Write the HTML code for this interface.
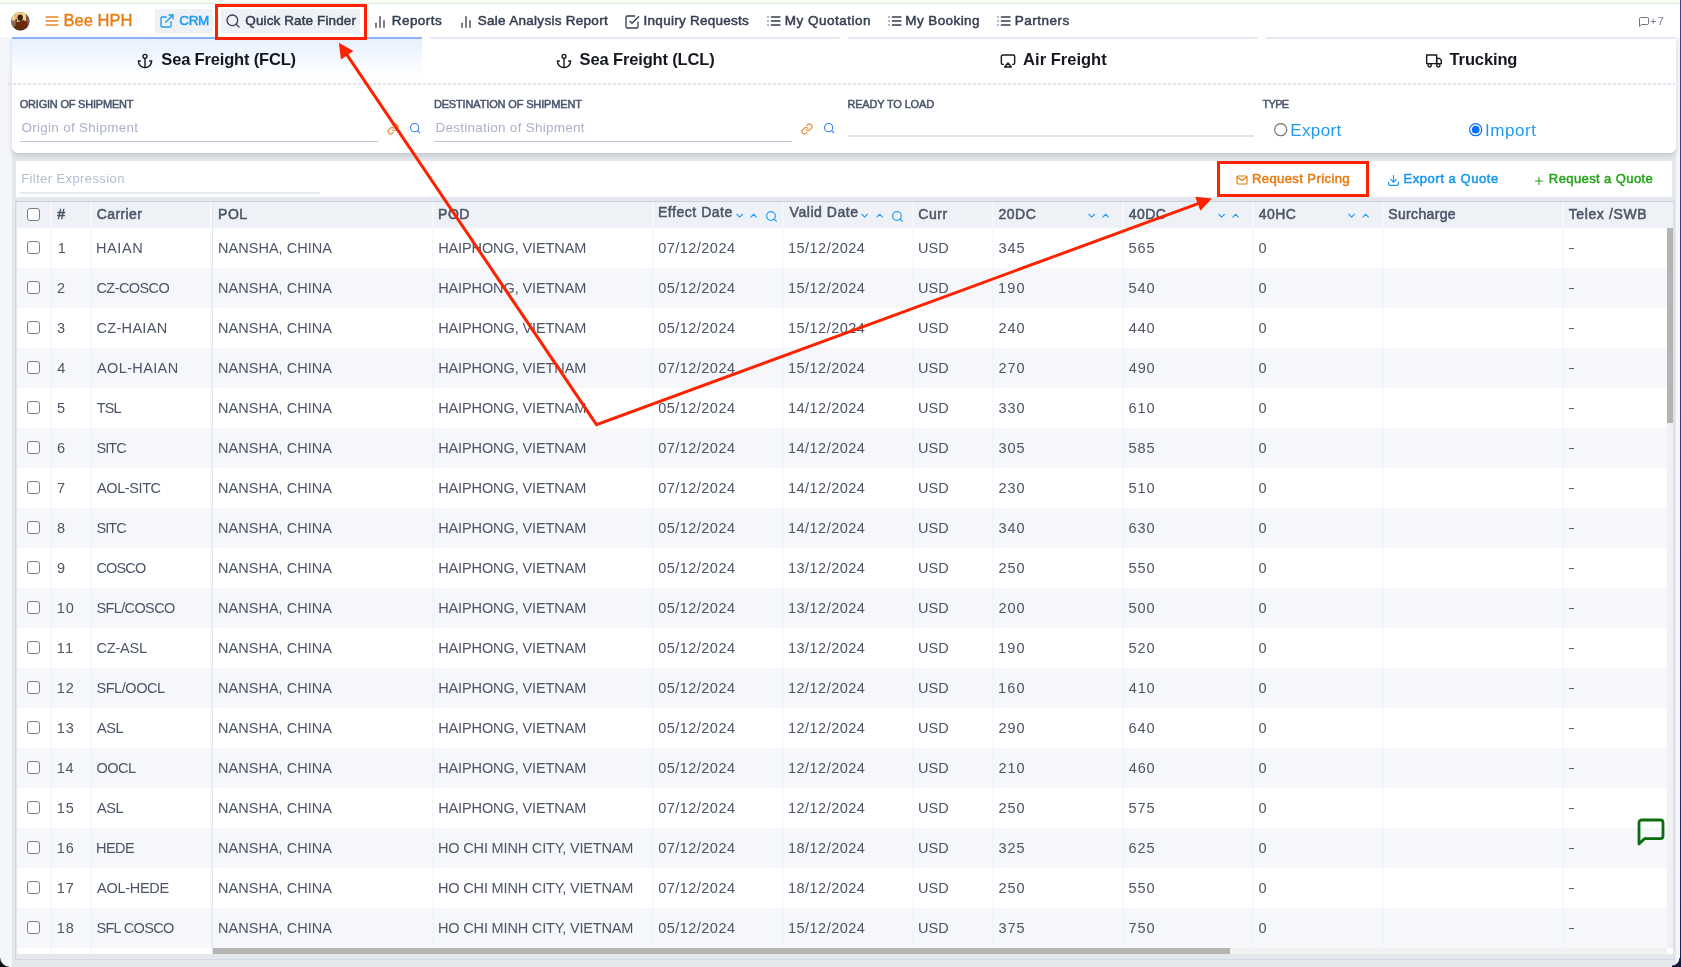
<!DOCTYPE html>
<html><head><meta charset="utf-8"><title>Bee HPH</title>
<style>
html,body{margin:0;padding:0;}
body{width:1681px;height:967px;overflow:hidden;position:relative;background:#f4f6fa;font-family:"Liberation Sans",sans-serif;}
.t{position:absolute;white-space:nowrap;line-height:20px;}
.r{position:absolute;}
svg{position:absolute;overflow:visible;}
</style></head><body><div id="w" style="position:absolute;left:0;top:0;width:1681px;height:967px;will-change:transform;">
<div class="r" style="left:0.00px;top:0.00px;width:1681.00px;height:4.00px;background:#f6fbf3;border-bottom:1px solid #dfe6dc;box-sizing:border-box;"></div>
<div class="r" style="left:0.00px;top:4.00px;width:1681.00px;height:33.00px;background:#ffffff;"></div>
<svg style="left:11.1px;top:11.7px" width="18.6" height="18.6" viewBox="0 0 18.6 18.6"><defs><clipPath id="av"><circle cx="9.3" cy="9.3" r="9.2"/></clipPath><filter id="avb" x="-10%" y="-10%" width="120%" height="120%"><feGaussianBlur stdDeviation="0.55"/></filter></defs><g clip-path="url(#av)"><rect width="18.6" height="18.6" fill="#6d4a3c"/><g filter="url(#avb)"><rect x="-1" y="-1" width="16" height="10" fill="#f3d08a"/><rect x="0" y="8.5" width="5" height="9" fill="#8a6a58"/><rect x="15" y="1" width="4" height="12" fill="#7b5648"/><rect x="4" y="1.5" width="2.2" height="6.5" fill="#f0b46a"/><ellipse cx="9.2" cy="5.6" rx="2.7" ry="3.2" fill="#38200f"/><path d="M4.6 11.5 Q5 8.4 8.5 8.4 L12.5 8.2 Q15.8 8.6 16.4 12 L16.6 19 L4.2 19 Z" fill="#692b08"/><rect x="4.6" y="7.3" width="1.6" height="2.6" fill="#3a2416"/><rect x="5.6" y="8.6" width="3" height="1.4" fill="#d9b98a"/><rect x="3.2" y="14.5" width="3.5" height="3.5" fill="#3a3a1c"/></g></g></svg>
<svg style="left:43.70px;top:12.70px" width="16.00" height="16.00" viewBox="0 0 24 24" fill="none" stroke="#e8872a" stroke-width="2.00" stroke-linecap="round" stroke-linejoin="round"><line x1="3" y1="12" x2="21" y2="12"/><line x1="3" y1="6" x2="21" y2="6"/><line x1="3" y1="18" x2="21" y2="18"/></svg>
<span class="t" style="left:63.45px;top:10px;font-size:16.50px;color:#e87a10;letter-spacing:0.042px;-webkit-text-stroke:0.35px #e87a10;">Bee HPH</span>
<div class="r" style="left:155.30px;top:8.60px;width:57.50px;height:24.50px;background:#eef1f6;"></div>
<svg style="left:158.70px;top:13.00px" width="16.00" height="16.00" viewBox="0 0 24 24" fill="none" stroke="#1e9bee" stroke-width="2.00" stroke-linecap="round" stroke-linejoin="round"><path d="M18 13v6a2 2 0 0 1-2 2H5a2 2 0 0 1-2-2V8a2 2 0 0 1 2-2h6"/><polyline points="15 3 21 3 21 9"/><line x1="10" y1="14" x2="21" y2="3"/></svg>
<span class="t" style="left:179.32px;top:11px;font-size:13.50px;color:#1e9bee;letter-spacing:-0.363px;-webkit-text-stroke:0.50px #1e9bee;">CRM</span>
<div class="r" style="left:221.10px;top:8.60px;width:139.00px;height:24.50px;background:#eef1f6;"></div>
<svg style="left:224.80px;top:13.30px" width="16.00" height="16.00" viewBox="0 0 24 24" fill="none" stroke="#353e53" stroke-width="2.00" stroke-linecap="round" stroke-linejoin="round"><circle cx="11" cy="11" r="8"/><line x1="21" y1="21" x2="16.65" y2="16.65"/></svg>
<span class="t" style="left:245.32px;top:11px;font-size:13.50px;color:#353e53;letter-spacing:0.112px;-webkit-text-stroke:0.50px #353e53;">Quick Rate Finder</span>
<svg style="left:372.00px;top:13.50px" width="16.00" height="16.00" viewBox="0 0 24 24" fill="none" stroke="#353e53" stroke-width="2.00" stroke-linecap="round" stroke-linejoin="round"><line x1="18" y1="20" x2="18" y2="10"/><line x1="12" y1="20" x2="12" y2="4"/><line x1="6" y1="20" x2="6" y2="14"/></svg>
<span class="t" style="left:391.75px;top:11px;font-size:13.50px;color:#353e53;letter-spacing:0.438px;-webkit-text-stroke:0.50px #353e53;">Reports</span>
<svg style="left:457.50px;top:13.50px" width="16.00" height="16.00" viewBox="0 0 24 24" fill="none" stroke="#353e53" stroke-width="2.00" stroke-linecap="round" stroke-linejoin="round"><line x1="18" y1="20" x2="18" y2="10"/><line x1="12" y1="20" x2="12" y2="4"/><line x1="6" y1="20" x2="6" y2="14"/></svg>
<span class="t" style="left:477.75px;top:11px;font-size:13.50px;color:#353e53;letter-spacing:0.283px;-webkit-text-stroke:0.50px #353e53;">Sale Analysis Report</span>
<svg style="left:623.90px;top:13.60px" width="16.00" height="16.00" viewBox="0 0 24 24" fill="none" stroke="#353e53" stroke-width="2.00" stroke-linecap="round" stroke-linejoin="round"><polyline points="9 11 12 14 22 4"/><path d="M21 12v7a2 2 0 0 1-2 2H5a2 2 0 0 1-2-2V5a2 2 0 0 1 2-2h11"/></svg>
<span class="t" style="left:643.62px;top:11px;font-size:13.50px;color:#353e53;letter-spacing:0.250px;-webkit-text-stroke:0.50px #353e53;">Inquiry Requests</span>
<svg style="left:765.80px;top:13.40px" width="16.00" height="16.00" viewBox="0 0 24 24" fill="none" stroke="#353e53" stroke-width="2.00" stroke-linecap="round" stroke-linejoin="round"><line x1="8" y1="6" x2="21" y2="6"/><line x1="8" y1="12" x2="21" y2="12"/><line x1="8" y1="18" x2="21" y2="18"/><line x1="3" y1="6" x2="3.01" y2="6"/><line x1="3" y1="12" x2="3.01" y2="12"/><line x1="3" y1="18" x2="3.01" y2="18"/></svg>
<span class="t" style="left:784.75px;top:11px;font-size:13.50px;color:#353e53;letter-spacing:0.500px;-webkit-text-stroke:0.50px #353e53;">My Quotation</span>
<svg style="left:886.50px;top:13.40px" width="16.00" height="16.00" viewBox="0 0 24 24" fill="none" stroke="#353e53" stroke-width="2.00" stroke-linecap="round" stroke-linejoin="round"><line x1="8" y1="6" x2="21" y2="6"/><line x1="8" y1="12" x2="21" y2="12"/><line x1="8" y1="18" x2="21" y2="18"/><line x1="3" y1="6" x2="3.01" y2="6"/><line x1="3" y1="12" x2="3.01" y2="12"/><line x1="3" y1="18" x2="3.01" y2="18"/></svg>
<span class="t" style="left:905.25px;top:11px;font-size:13.50px;color:#353e53;letter-spacing:0.417px;-webkit-text-stroke:0.50px #353e53;">My Booking</span>
<svg style="left:996.10px;top:13.40px" width="16.00" height="16.00" viewBox="0 0 24 24" fill="none" stroke="#353e53" stroke-width="2.00" stroke-linecap="round" stroke-linejoin="round"><line x1="8" y1="6" x2="21" y2="6"/><line x1="8" y1="12" x2="21" y2="12"/><line x1="8" y1="18" x2="21" y2="18"/><line x1="3" y1="6" x2="3.01" y2="6"/><line x1="3" y1="12" x2="3.01" y2="12"/><line x1="3" y1="18" x2="3.01" y2="18"/></svg>
<span class="t" style="left:1014.75px;top:11px;font-size:13.50px;color:#353e53;letter-spacing:0.482px;-webkit-text-stroke:0.50px #353e53;">Partners</span>
<svg style="left:1637.90px;top:16.40px" width="12.00" height="12.00" viewBox="0 0 24 24" fill="none" stroke="#5f6672" stroke-width="1.80" stroke-linecap="round" stroke-linejoin="round"><path d="M21 15a2 2 0 0 1-2 2H7l-4 4V5a2 2 0 0 1 2-2h14a2 2 0 0 1 2 2z"/></svg>
<span class="t" style="left:1649.90px;top:11px;font-size:11.00px;color:#7a808c;letter-spacing:1.500px;">+7</span>
<div class="r" style="left:12.00px;top:150.00px;width:1664.00px;height:817.00px;background:#e4e7ec;"></div>
<div class="r" style="left:12.00px;top:37.00px;width:1664.00px;height:116.00px;background:#ffffff;border-radius:0 4px 6px 6px;box-shadow:0 3px 5px rgba(60,70,90,.18);"></div>
<div class="r" style="left:12.00px;top:39.00px;width:410.00px;height:37.00px;background:linear-gradient(#e7f0fe,#ffffff);"></div>
<div class="r" style="left:12.00px;top:37.00px;width:410.00px;height:2.00px;background:#8bb0fb;"></div>
<div class="r" style="left:430.00px;top:37.00px;width:410.00px;height:2.00px;background:#e6e9f1;"></div>
<div class="r" style="left:848.00px;top:37.00px;width:410.00px;height:2.00px;background:#e6e9f1;"></div>
<div class="r" style="left:1266.00px;top:37.00px;width:410.00px;height:2.00px;background:#e6e9f1;"></div>
<svg style="left:137.10px;top:52.50px" width="16.00" height="16.00" viewBox="0 0 24 24" fill="none" stroke="#15181e" stroke-width="2.10" stroke-linecap="round" stroke-linejoin="round"><circle cx="12" cy="5" r="3"/><line x1="12" y1="22" x2="12" y2="8"/><path d="M5 12H2a10 10 0 0 0 20 0h-3"/></svg>
<span class="t" style="left:161.32px;top:49px;font-size:16.50px;color:#15181e;font-weight:700;letter-spacing:-0.173px;">Sea Freight (FCL)</span>
<svg style="left:555.60px;top:52.50px" width="16.00" height="16.00" viewBox="0 0 24 24" fill="none" stroke="#15181e" stroke-width="2.10" stroke-linecap="round" stroke-linejoin="round"><circle cx="12" cy="5" r="3"/><line x1="12" y1="22" x2="12" y2="8"/><path d="M5 12H2a10 10 0 0 0 20 0h-3"/></svg>
<span class="t" style="left:579.62px;top:49px;font-size:16.50px;color:#15181e;font-weight:700;letter-spacing:-0.148px;">Sea Freight (LCL)</span>
<svg style="left:999.50px;top:52.90px" width="16.00" height="16.00" viewBox="0 0 24 24" fill="none" stroke="#15181e" stroke-width="2.10" stroke-linecap="round" stroke-linejoin="round"><path d="M5 17H4a2 2 0 0 1-2-2V5a2 2 0 0 1 2-2h16a2 2 0 0 1 2 2v10a2 2 0 0 1-2 2h-1"/><polygon points="12 15 17 21 7 21 12 15"/></svg>
<span class="t" style="left:1023.12px;top:49px;font-size:16.50px;color:#15181e;font-weight:700;letter-spacing:0.013px;">Air Freight</span>
<svg style="left:1425.70px;top:53.00px" width="16.00" height="16.00" viewBox="0 0 24 24" fill="none" stroke="#15181e" stroke-width="2.10" stroke-linecap="round" stroke-linejoin="round"><rect x="1" y="3" width="15" height="13"/><polygon points="16 8 20 8 23 11 23 16 16 16 16 8"/><circle cx="5.5" cy="18.5" r="2.5"/><circle cx="18.5" cy="18.5" r="2.5"/></svg>
<span class="t" style="left:1449.58px;top:49px;font-size:16.50px;color:#15181e;font-weight:700;letter-spacing:-0.129px;">Trucking</span>
<svg style="left:0;top:0" width="1681" height="100"><line x1="8" y1="84" x2="1675" y2="84" stroke="#e0e3ee" stroke-width="2" stroke-dasharray="3 2"/></svg>
<span class="t" style="left:19.75px;top:94px;font-size:11.00px;color:#4b556c;letter-spacing:-0.213px;-webkit-text-stroke:0.50px #4b556c;">ORIGIN OF SHIPMENT</span>
<span class="t" style="left:433.88px;top:94px;font-size:11.00px;color:#4b556c;letter-spacing:-0.148px;-webkit-text-stroke:0.50px #4b556c;">DESTINATION OF SHIPMENT</span>
<span class="t" style="left:847.38px;top:94px;font-size:11.00px;color:#4b556c;letter-spacing:-0.156px;-webkit-text-stroke:0.50px #4b556c;">READY TO LOAD</span>
<span class="t" style="left:1262.42px;top:94px;font-size:11.00px;color:#4b556c;letter-spacing:-0.642px;-webkit-text-stroke:0.50px #4b556c;">TYPE</span>
<span class="t" style="left:21.38px;top:118px;font-size:13.50px;color:#aab2c8;letter-spacing:0.287px;">Origin of Shipment</span>
<span class="t" style="left:435.50px;top:118px;font-size:13.50px;color:#aab2c8;letter-spacing:0.256px;">Destination of Shipment</span>
<div class="r" style="left:20.00px;top:141.00px;width:358.00px;height:1.00px;background:#bcc4da;"></div>
<div class="r" style="left:434.00px;top:141.00px;width:358.00px;height:1.00px;background:#bcc4da;"></div>
<div class="r" style="left:848.00px;top:135.10px;width:405.60px;height:1.90px;background:#e0e3ed;"></div>
<svg style="left:387.00px;top:123.10px" width="12.00" height="12.00" viewBox="0 0 24 24" fill="none" stroke="#e8862a" stroke-width="2.10" stroke-linecap="round" stroke-linejoin="round"><path d="M10 13a5 5 0 0 0 7.54.54l3-3a5 5 0 0 0-7.07-7.07l-1.72 1.71"/><path d="M14 11a5 5 0 0 0-7.54-.54l-3 3a5 5 0 0 0 7.07 7.07l1.71-1.71"/></svg>
<svg style="left:408.80px;top:121.90px" width="12.30" height="12.30" viewBox="0 0 24 24" fill="none" stroke="#3b82f6" stroke-width="2.20" stroke-linecap="round" stroke-linejoin="round"><circle cx="11" cy="11" r="8"/><line x1="21" y1="21" x2="16.65" y2="16.65"/></svg>
<svg style="left:801.00px;top:123.10px" width="12.00" height="12.00" viewBox="0 0 24 24" fill="none" stroke="#e8862a" stroke-width="2.10" stroke-linecap="round" stroke-linejoin="round"><path d="M10 13a5 5 0 0 0 7.54.54l3-3a5 5 0 0 0-7.07-7.07l-1.72 1.71"/><path d="M14 11a5 5 0 0 0-7.54-.54l-3 3a5 5 0 0 0 7.07 7.07l1.71-1.71"/></svg>
<svg style="left:822.50px;top:121.90px" width="12.30" height="12.30" viewBox="0 0 24 24" fill="none" stroke="#3b82f6" stroke-width="2.20" stroke-linecap="round" stroke-linejoin="round"><circle cx="11" cy="11" r="8"/><line x1="21" y1="21" x2="16.65" y2="16.65"/></svg>
<svg style="left:1273.9px;top:122.6px" width="13.4" height="13.4" viewBox="0 0 13.4 13.4"><circle cx="6.7" cy="6.7" r="6.05" fill="#fff" stroke="#6f6f6f" stroke-width="1.15"/></svg>
<span class="t" style="left:1290.33px;top:121px;font-size:17.00px;color:#1e9bee;letter-spacing:0.335px;">Export</span>
<svg style="left:1468.8px;top:122.6px" width="13.4" height="13.4" viewBox="0 0 13.4 13.4"><circle cx="6.7" cy="6.7" r="6.05" fill="#fff" stroke="#0b6efd" stroke-width="1.25"/><circle cx="6.7" cy="6.7" r="3.85" fill="#0b6efd"/></svg>
<span class="t" style="left:1485.10px;top:121px;font-size:17.00px;color:#1e9bee;letter-spacing:0.535px;">Import</span>
<div class="r" style="left:16.00px;top:161.00px;width:1656.00px;height:36.20px;background:#ffffff;"></div>
<span class="t" style="left:21.20px;top:169px;font-size:13.00px;color:#b4bcd0;letter-spacing:0.398px;">Filter Expression</span>
<div class="r" style="left:20.00px;top:192.00px;width:300.00px;height:2.00px;background:#e6e9f0;"></div>
<svg style="left:1236.40px;top:174.30px" width="12.00" height="12.00" viewBox="0 0 24 24" fill="none" stroke="#e87a10" stroke-width="2.30" stroke-linecap="round" stroke-linejoin="round"><path d="M4 4h16c1.1 0 2 .9 2 2v12c0 1.1-.9 2-2 2H4c-1.1 0-2-.9-2-2V6c0-1.1.9-2 2-2z"/><polyline points="22,6 12,13 2,6"/></svg>
<span class="t" style="left:1251.95px;top:169px;font-size:13.00px;color:#e87a10;letter-spacing:0.421px;-webkit-text-stroke:0.50px #e87a10;">Request Pricing</span>
<svg style="left:1387.00px;top:174.30px" width="13.00" height="13.00" viewBox="0 0 24 24" fill="none" stroke="#1597ee" stroke-width="2.20" stroke-linecap="round" stroke-linejoin="round"><path d="M21 15v4a2 2 0 0 1-2 2H5a2 2 0 0 1-2-2v-4"/><polyline points="7 10 12 15 17 10"/><line x1="12" y1="15" x2="12" y2="3"/></svg>
<span class="t" style="left:1403.45px;top:169px;font-size:13.00px;color:#1597ee;letter-spacing:0.569px;-webkit-text-stroke:0.50px #1597ee;">Export a Quote</span>
<svg style="left:1532.95px;top:174.50px" width="12.00" height="12.00" viewBox="0 0 24 24" fill="none" stroke="#27a31a" stroke-width="2.20" stroke-linecap="round" stroke-linejoin="round"><line x1="12" y1="5" x2="12" y2="19"/><line x1="5" y1="12" x2="19" y2="12"/></svg>
<span class="t" style="left:1548.85px;top:169px;font-size:13.00px;color:#27a31a;letter-spacing:0.404px;-webkit-text-stroke:0.50px #27a31a;">Request a Quote</span>
<div class="r" style="left:15.3px;top:200.8px;width:1660.2px;height:758.8px;box-sizing:border-box;border:1.4px solid #d5dae6;border-top:1.2px solid #cbd0de;border-right:2.7px solid #dce0e9;border-bottom:1.8px solid #d3d9e6"></div>
<div class="r" style="left:16.50px;top:202.00px;width:1656.70px;height:26.00px;background:#eef2f7;"></div>
<div class="r" style="left:16.50px;top:228.00px;width:1656.70px;height:40.00px;background:#ffffff;"></div>
<div class="r" style="left:16.50px;top:268.00px;width:1656.70px;height:40.00px;background:#f5f7fb;"></div>
<div class="r" style="left:16.50px;top:308.00px;width:1656.70px;height:40.00px;background:#ffffff;"></div>
<div class="r" style="left:16.50px;top:348.00px;width:1656.70px;height:40.00px;background:#f5f7fb;"></div>
<div class="r" style="left:16.50px;top:388.00px;width:1656.70px;height:40.00px;background:#ffffff;"></div>
<div class="r" style="left:16.50px;top:428.00px;width:1656.70px;height:40.00px;background:#f5f7fb;"></div>
<div class="r" style="left:16.50px;top:468.00px;width:1656.70px;height:40.00px;background:#ffffff;"></div>
<div class="r" style="left:16.50px;top:508.00px;width:1656.70px;height:40.00px;background:#f5f7fb;"></div>
<div class="r" style="left:16.50px;top:548.00px;width:1656.70px;height:40.00px;background:#ffffff;"></div>
<div class="r" style="left:16.50px;top:588.00px;width:1656.70px;height:40.00px;background:#f5f7fb;"></div>
<div class="r" style="left:16.50px;top:628.00px;width:1656.70px;height:40.00px;background:#ffffff;"></div>
<div class="r" style="left:16.50px;top:668.00px;width:1656.70px;height:40.00px;background:#f5f7fb;"></div>
<div class="r" style="left:16.50px;top:708.00px;width:1656.70px;height:40.00px;background:#ffffff;"></div>
<div class="r" style="left:16.50px;top:748.00px;width:1656.70px;height:40.00px;background:#f5f7fb;"></div>
<div class="r" style="left:16.50px;top:788.00px;width:1656.70px;height:40.00px;background:#ffffff;"></div>
<div class="r" style="left:16.50px;top:828.00px;width:1656.70px;height:40.00px;background:#f5f7fb;"></div>
<div class="r" style="left:16.50px;top:868.00px;width:1656.70px;height:40.00px;background:#ffffff;"></div>
<div class="r" style="left:16.50px;top:908.00px;width:1656.70px;height:40.00px;background:#f5f7fb;"></div>
<div class="r" style="left:16.50px;top:948.00px;width:197.00px;height:6.00px;background:#ffffff;"></div>
<div class="r" style="left:50.00px;top:202.00px;width:2.00px;height:26.00px;background:#f5f7fa;"></div>
<div class="r" style="left:50.00px;top:228.00px;width:2.00px;height:726.00px;background:rgba(238,241,247,.45);"></div>
<div class="r" style="left:90.00px;top:202.00px;width:2.00px;height:26.00px;background:#f5f7fa;"></div>
<div class="r" style="left:90.00px;top:228.00px;width:2.00px;height:726.00px;background:rgba(238,241,247,.45);"></div>
<div class="r" style="left:432.00px;top:202.00px;width:2.00px;height:26.00px;background:#f5f7fa;"></div>
<div class="r" style="left:432.00px;top:228.00px;width:2.00px;height:720.00px;background:rgba(238,241,247,.45);"></div>
<div class="r" style="left:652.00px;top:202.00px;width:2.00px;height:26.00px;background:#f5f7fa;"></div>
<div class="r" style="left:652.00px;top:228.00px;width:2.00px;height:720.00px;background:rgba(238,241,247,.45);"></div>
<div class="r" style="left:782.00px;top:202.00px;width:2.00px;height:26.00px;background:#f5f7fa;"></div>
<div class="r" style="left:782.00px;top:228.00px;width:2.00px;height:720.00px;background:rgba(238,241,247,.45);"></div>
<div class="r" style="left:912.00px;top:202.00px;width:2.00px;height:26.00px;background:#f5f7fa;"></div>
<div class="r" style="left:912.00px;top:228.00px;width:2.00px;height:720.00px;background:rgba(238,241,247,.45);"></div>
<div class="r" style="left:992.00px;top:202.00px;width:2.00px;height:26.00px;background:#f5f7fa;"></div>
<div class="r" style="left:992.00px;top:228.00px;width:2.00px;height:720.00px;background:rgba(238,241,247,.45);"></div>
<div class="r" style="left:1122.00px;top:202.00px;width:2.00px;height:26.00px;background:#f5f7fa;"></div>
<div class="r" style="left:1122.00px;top:228.00px;width:2.00px;height:720.00px;background:rgba(238,241,247,.45);"></div>
<div class="r" style="left:1252.00px;top:202.00px;width:2.00px;height:26.00px;background:#f5f7fa;"></div>
<div class="r" style="left:1252.00px;top:228.00px;width:2.00px;height:720.00px;background:rgba(238,241,247,.45);"></div>
<div class="r" style="left:1382.00px;top:202.00px;width:2.00px;height:26.00px;background:#f5f7fa;"></div>
<div class="r" style="left:1382.00px;top:228.00px;width:2.00px;height:720.00px;background:rgba(238,241,247,.45);"></div>
<div class="r" style="left:1562.00px;top:202.00px;width:2.00px;height:26.00px;background:#f5f7fa;"></div>
<div class="r" style="left:1562.00px;top:228.00px;width:2.00px;height:720.00px;background:rgba(238,241,247,.45);"></div>
<div class="r" style="left:209.90px;top:202.00px;width:1.90px;height:26.00px;background:#f6f8fb;"></div>
<div class="r" style="left:209.90px;top:228.00px;width:1.90px;height:726.00px;background:rgba(238,241,247,.45);"></div>
<div class="r" style="left:211.70px;top:202.00px;width:1.70px;height:752.00px;background:#e2e5ed;"></div>
<div class="r" style="left:1667.20px;top:228.00px;width:6.00px;height:720.00px;background:#f1f1f1;"></div>
<div class="r" style="left:1667.35px;top:228.00px;width:6.05px;height:195.30px;background:#b6b4b2;"></div>
<div class="r" style="left:213.20px;top:948.00px;width:1454.10px;height:6.00px;background:#f1f1f1;"></div>
<div class="r" style="left:213.20px;top:948.20px;width:1016.60px;height:5.60px;background:#b6b4b2;"></div>
<div class="r" style="left:1667.20px;top:948.00px;width:6.00px;height:6.00px;background:#ffffff;"></div>
<span class="t" style="left:57.35px;top:204px;font-size:14.00px;color:#4a5466;letter-spacing:-0.750px;-webkit-text-stroke:0.50px #4a5466;">#</span>
<span class="t" style="left:96.72px;top:204px;font-size:14.00px;color:#4a5466;letter-spacing:0.383px;-webkit-text-stroke:0.50px #4a5466;">Carrier</span>
<span class="t" style="left:218.12px;top:204px;font-size:14.00px;color:#4a5466;letter-spacing:0.500px;-webkit-text-stroke:0.50px #4a5466;">POL</span>
<span class="t" style="left:438.12px;top:204px;font-size:14.00px;color:#4a5466;letter-spacing:0.438px;-webkit-text-stroke:0.50px #4a5466;">POD</span>
<span class="t" style="left:657.92px;top:202px;font-size:14.00px;color:#4a5466;letter-spacing:0.542px;-webkit-text-stroke:0.50px #4a5466;">Effect Date</span>
<span class="t" style="left:789.55px;top:202px;font-size:14.00px;color:#4a5466;letter-spacing:0.556px;-webkit-text-stroke:0.50px #4a5466;">Valid Date</span>
<span class="t" style="left:918.33px;top:204px;font-size:14.00px;color:#4a5466;letter-spacing:0.575px;-webkit-text-stroke:0.50px #4a5466;">Curr</span>
<span class="t" style="left:998.62px;top:204px;font-size:14.00px;color:#4a5466;letter-spacing:0.458px;-webkit-text-stroke:0.50px #4a5466;">20DC</span>
<span class="t" style="left:1128.70px;top:204px;font-size:14.00px;color:#4a5466;letter-spacing:0.433px;-webkit-text-stroke:0.50px #4a5466;">40DC</span>
<span class="t" style="left:1258.70px;top:204px;font-size:14.00px;color:#4a5466;letter-spacing:0.433px;-webkit-text-stroke:0.50px #4a5466;">40HC</span>
<span class="t" style="left:1388.33px;top:204px;font-size:14.00px;color:#4a5466;letter-spacing:0.328px;-webkit-text-stroke:0.50px #4a5466;">Surcharge</span>
<span class="t" style="left:1568.70px;top:204px;font-size:14.00px;color:#4a5466;letter-spacing:0.625px;-webkit-text-stroke:0.50px #4a5466;">Telex /SWB</span>
<svg style="left:733.80px;top:210.30px" width="11.30" height="11.30" viewBox="0 0 24 24" fill="none" stroke="#2a9ff0" stroke-width="2.40" stroke-linecap="round" stroke-linejoin="round"><polyline points="6 9 12 15 18 9"/></svg>
<svg style="left:747.85px;top:210.30px" width="11.30" height="11.30" viewBox="0 0 24 24" fill="none" stroke="#2a9ff0" stroke-width="2.40" stroke-linecap="round" stroke-linejoin="round"><polyline points="18 15 12 9 6 15"/></svg>
<svg style="left:765.10px;top:209.60px" width="13.00" height="13.00" viewBox="0 0 24 24" fill="none" stroke="#2a9ff0" stroke-width="2.30" stroke-linecap="round" stroke-linejoin="round"><circle cx="11" cy="11" r="8"/><line x1="21" y1="21" x2="16.65" y2="16.65"/></svg>
<svg style="left:859.45px;top:210.30px" width="11.30" height="11.30" viewBox="0 0 24 24" fill="none" stroke="#2a9ff0" stroke-width="2.40" stroke-linecap="round" stroke-linejoin="round"><polyline points="6 9 12 15 18 9"/></svg>
<svg style="left:873.50px;top:210.30px" width="11.30" height="11.30" viewBox="0 0 24 24" fill="none" stroke="#2a9ff0" stroke-width="2.40" stroke-linecap="round" stroke-linejoin="round"><polyline points="18 15 12 9 6 15"/></svg>
<svg style="left:890.90px;top:209.60px" width="13.00" height="13.00" viewBox="0 0 24 24" fill="none" stroke="#2a9ff0" stroke-width="2.30" stroke-linecap="round" stroke-linejoin="round"><circle cx="11" cy="11" r="8"/><line x1="21" y1="21" x2="16.65" y2="16.65"/></svg>
<svg style="left:1085.85px;top:210.30px" width="11.30" height="11.30" viewBox="0 0 24 24" fill="none" stroke="#2a9ff0" stroke-width="2.40" stroke-linecap="round" stroke-linejoin="round"><polyline points="6 9 12 15 18 9"/></svg>
<svg style="left:1099.90px;top:210.30px" width="11.30" height="11.30" viewBox="0 0 24 24" fill="none" stroke="#2a9ff0" stroke-width="2.40" stroke-linecap="round" stroke-linejoin="round"><polyline points="18 15 12 9 6 15"/></svg>
<svg style="left:1215.85px;top:210.30px" width="11.30" height="11.30" viewBox="0 0 24 24" fill="none" stroke="#2a9ff0" stroke-width="2.40" stroke-linecap="round" stroke-linejoin="round"><polyline points="6 9 12 15 18 9"/></svg>
<svg style="left:1229.90px;top:210.30px" width="11.30" height="11.30" viewBox="0 0 24 24" fill="none" stroke="#2a9ff0" stroke-width="2.40" stroke-linecap="round" stroke-linejoin="round"><polyline points="18 15 12 9 6 15"/></svg>
<svg style="left:1345.85px;top:210.30px" width="11.30" height="11.30" viewBox="0 0 24 24" fill="none" stroke="#2a9ff0" stroke-width="2.40" stroke-linecap="round" stroke-linejoin="round"><polyline points="6 9 12 15 18 9"/></svg>
<svg style="left:1359.90px;top:210.30px" width="11.30" height="11.30" viewBox="0 0 24 24" fill="none" stroke="#2a9ff0" stroke-width="2.40" stroke-linecap="round" stroke-linejoin="round"><polyline points="18 15 12 9 6 15"/></svg>
<div class="r" style="left:27.1px;top:208.30px;width:12.7px;height:13px;box-sizing:border-box;border:1.3px solid #7d7d7d;border-radius:3px;background:#fff"></div>
<div class="r" style="left:27.1px;top:241.10px;width:12.7px;height:13px;box-sizing:border-box;border:1.3px solid #7d7d7d;border-radius:3px;background:#fff"></div>
<span class="t" style="left:57.80px;top:238px;font-size:14.50px;color:#4b5565;">1</span>
<span class="t" style="left:95.97px;top:238px;font-size:14.50px;color:#4b5565;letter-spacing:0.619px;">HAIAN</span>
<span class="t" style="left:218.07px;top:238px;font-size:14.50px;color:#4b5565;letter-spacing:0.017px;">NANSHA, CHINA</span>
<span class="t" style="left:438.18px;top:238px;font-size:14.50px;color:#4b5565;letter-spacing:-0.108px;">HAIPHONG, VIETNAM</span>
<span class="t" style="left:658.20px;top:238px;font-size:14.50px;color:#4b5565;letter-spacing:0.472px;">07/12/2024</span>
<span class="t" style="left:788.00px;top:238px;font-size:14.50px;color:#4b5565;letter-spacing:0.472px;">15/12/2024</span>
<span class="t" style="left:918.00px;top:238px;font-size:14.50px;color:#4b5565;letter-spacing:0.000px;">USD</span>
<span class="t" style="left:998.50px;top:238px;font-size:14.50px;color:#4b5565;letter-spacing:0.938px;">345</span>
<span class="t" style="left:1128.50px;top:238px;font-size:14.50px;color:#4b5565;letter-spacing:0.938px;">565</span>
<span class="t" style="left:1258.50px;top:238px;font-size:14.50px;color:#4b5565;letter-spacing:1.000px;">0</span>
<div class="r" style="left:1569.20px;top:247.80px;width:4.40px;height:1.30px;background:#5a6474;"></div>
<div class="r" style="left:27.1px;top:281.10px;width:12.7px;height:13px;box-sizing:border-box;border:1.3px solid #7d7d7d;border-radius:3px;background:#fff"></div>
<span class="t" style="left:56.98px;top:278px;font-size:14.50px;color:#4b5565;">2</span>
<span class="t" style="left:96.47px;top:278px;font-size:14.50px;color:#4b5565;letter-spacing:-0.571px;">CZ-COSCO</span>
<span class="t" style="left:218.07px;top:278px;font-size:14.50px;color:#4b5565;letter-spacing:0.017px;">NANSHA, CHINA</span>
<span class="t" style="left:438.18px;top:278px;font-size:14.50px;color:#4b5565;letter-spacing:-0.108px;">HAIPHONG, VIETNAM</span>
<span class="t" style="left:658.20px;top:278px;font-size:14.50px;color:#4b5565;letter-spacing:0.472px;">05/12/2024</span>
<span class="t" style="left:788.00px;top:278px;font-size:14.50px;color:#4b5565;letter-spacing:0.472px;">15/12/2024</span>
<span class="t" style="left:918.00px;top:278px;font-size:14.50px;color:#4b5565;letter-spacing:0.000px;">USD</span>
<span class="t" style="left:998.00px;top:278px;font-size:14.50px;color:#4b5565;letter-spacing:1.188px;">190</span>
<span class="t" style="left:1128.50px;top:278px;font-size:14.50px;color:#4b5565;letter-spacing:0.938px;">540</span>
<span class="t" style="left:1258.50px;top:278px;font-size:14.50px;color:#4b5565;letter-spacing:1.000px;">0</span>
<div class="r" style="left:1569.20px;top:287.80px;width:4.40px;height:1.30px;background:#5a6474;"></div>
<div class="r" style="left:27.1px;top:321.10px;width:12.7px;height:13px;box-sizing:border-box;border:1.3px solid #7d7d7d;border-radius:3px;background:#fff"></div>
<span class="t" style="left:57.10px;top:318px;font-size:14.50px;color:#4b5565;">3</span>
<span class="t" style="left:96.47px;top:318px;font-size:14.50px;color:#4b5565;letter-spacing:0.321px;">CZ-HAIAN</span>
<span class="t" style="left:218.07px;top:318px;font-size:14.50px;color:#4b5565;letter-spacing:0.017px;">NANSHA, CHINA</span>
<span class="t" style="left:438.18px;top:318px;font-size:14.50px;color:#4b5565;letter-spacing:-0.108px;">HAIPHONG, VIETNAM</span>
<span class="t" style="left:658.20px;top:318px;font-size:14.50px;color:#4b5565;letter-spacing:0.472px;">05/12/2024</span>
<span class="t" style="left:788.00px;top:318px;font-size:14.50px;color:#4b5565;letter-spacing:0.472px;">15/12/2024</span>
<span class="t" style="left:918.00px;top:318px;font-size:14.50px;color:#4b5565;letter-spacing:0.000px;">USD</span>
<span class="t" style="left:998.38px;top:318px;font-size:14.50px;color:#4b5565;letter-spacing:1.000px;">240</span>
<span class="t" style="left:1128.75px;top:318px;font-size:14.50px;color:#4b5565;letter-spacing:0.812px;">440</span>
<span class="t" style="left:1258.50px;top:318px;font-size:14.50px;color:#4b5565;letter-spacing:1.000px;">0</span>
<div class="r" style="left:1569.20px;top:327.80px;width:4.40px;height:1.30px;background:#5a6474;"></div>
<div class="r" style="left:27.1px;top:361.10px;width:12.7px;height:13px;box-sizing:border-box;border:1.3px solid #7d7d7d;border-radius:3px;background:#fff"></div>
<span class="t" style="left:57.35px;top:358px;font-size:14.50px;color:#4b5565;">4</span>
<span class="t" style="left:97.10px;top:358px;font-size:14.50px;color:#4b5565;letter-spacing:0.359px;">AOL-HAIAN</span>
<span class="t" style="left:218.07px;top:358px;font-size:14.50px;color:#4b5565;letter-spacing:0.017px;">NANSHA, CHINA</span>
<span class="t" style="left:438.18px;top:358px;font-size:14.50px;color:#4b5565;letter-spacing:-0.108px;">HAIPHONG, VIETNAM</span>
<span class="t" style="left:658.20px;top:358px;font-size:14.50px;color:#4b5565;letter-spacing:0.472px;">07/12/2024</span>
<span class="t" style="left:788.00px;top:358px;font-size:14.50px;color:#4b5565;letter-spacing:0.472px;">15/12/2024</span>
<span class="t" style="left:918.00px;top:358px;font-size:14.50px;color:#4b5565;letter-spacing:0.000px;">USD</span>
<span class="t" style="left:998.38px;top:358px;font-size:14.50px;color:#4b5565;letter-spacing:1.000px;">270</span>
<span class="t" style="left:1128.75px;top:358px;font-size:14.50px;color:#4b5565;letter-spacing:0.812px;">490</span>
<span class="t" style="left:1258.50px;top:358px;font-size:14.50px;color:#4b5565;letter-spacing:1.000px;">0</span>
<div class="r" style="left:1569.20px;top:367.80px;width:4.40px;height:1.30px;background:#5a6474;"></div>
<div class="r" style="left:27.1px;top:401.10px;width:12.7px;height:13px;box-sizing:border-box;border:1.3px solid #7d7d7d;border-radius:3px;background:#fff"></div>
<span class="t" style="left:57.10px;top:398px;font-size:14.50px;color:#4b5565;">5</span>
<span class="t" style="left:96.85px;top:398px;font-size:14.50px;color:#4b5565;letter-spacing:-0.938px;">TSL</span>
<span class="t" style="left:218.07px;top:398px;font-size:14.50px;color:#4b5565;letter-spacing:0.017px;">NANSHA, CHINA</span>
<span class="t" style="left:438.18px;top:398px;font-size:14.50px;color:#4b5565;letter-spacing:-0.108px;">HAIPHONG, VIETNAM</span>
<span class="t" style="left:658.20px;top:398px;font-size:14.50px;color:#4b5565;letter-spacing:0.472px;">05/12/2024</span>
<span class="t" style="left:788.00px;top:398px;font-size:14.50px;color:#4b5565;letter-spacing:0.472px;">14/12/2024</span>
<span class="t" style="left:918.00px;top:398px;font-size:14.50px;color:#4b5565;letter-spacing:0.000px;">USD</span>
<span class="t" style="left:998.50px;top:398px;font-size:14.50px;color:#4b5565;letter-spacing:0.938px;">330</span>
<span class="t" style="left:1128.38px;top:398px;font-size:14.50px;color:#4b5565;letter-spacing:1.000px;">610</span>
<span class="t" style="left:1258.50px;top:398px;font-size:14.50px;color:#4b5565;letter-spacing:1.000px;">0</span>
<div class="r" style="left:1569.20px;top:407.80px;width:4.40px;height:1.30px;background:#5a6474;"></div>
<div class="r" style="left:27.1px;top:441.10px;width:12.7px;height:13px;box-sizing:border-box;border:1.3px solid #7d7d7d;border-radius:3px;background:#fff"></div>
<span class="t" style="left:56.98px;top:438px;font-size:14.50px;color:#4b5565;">6</span>
<span class="t" style="left:96.47px;top:438px;font-size:14.50px;color:#4b5565;letter-spacing:-0.958px;">SITC</span>
<span class="t" style="left:218.07px;top:438px;font-size:14.50px;color:#4b5565;letter-spacing:0.017px;">NANSHA, CHINA</span>
<span class="t" style="left:438.18px;top:438px;font-size:14.50px;color:#4b5565;letter-spacing:-0.108px;">HAIPHONG, VIETNAM</span>
<span class="t" style="left:658.20px;top:438px;font-size:14.50px;color:#4b5565;letter-spacing:0.472px;">07/12/2024</span>
<span class="t" style="left:788.00px;top:438px;font-size:14.50px;color:#4b5565;letter-spacing:0.472px;">14/12/2024</span>
<span class="t" style="left:918.00px;top:438px;font-size:14.50px;color:#4b5565;letter-spacing:0.000px;">USD</span>
<span class="t" style="left:998.50px;top:438px;font-size:14.50px;color:#4b5565;letter-spacing:0.938px;">305</span>
<span class="t" style="left:1128.50px;top:438px;font-size:14.50px;color:#4b5565;letter-spacing:0.938px;">585</span>
<span class="t" style="left:1258.50px;top:438px;font-size:14.50px;color:#4b5565;letter-spacing:1.000px;">0</span>
<div class="r" style="left:1569.20px;top:447.80px;width:4.40px;height:1.30px;background:#5a6474;"></div>
<div class="r" style="left:27.1px;top:481.10px;width:12.7px;height:13px;box-sizing:border-box;border:1.3px solid #7d7d7d;border-radius:3px;background:#fff"></div>
<span class="t" style="left:56.98px;top:478px;font-size:14.50px;color:#4b5565;">7</span>
<span class="t" style="left:97.10px;top:478px;font-size:14.50px;color:#4b5565;letter-spacing:-0.411px;">AOL-SITC</span>
<span class="t" style="left:218.07px;top:478px;font-size:14.50px;color:#4b5565;letter-spacing:0.017px;">NANSHA, CHINA</span>
<span class="t" style="left:438.18px;top:478px;font-size:14.50px;color:#4b5565;letter-spacing:-0.108px;">HAIPHONG, VIETNAM</span>
<span class="t" style="left:658.20px;top:478px;font-size:14.50px;color:#4b5565;letter-spacing:0.472px;">07/12/2024</span>
<span class="t" style="left:788.00px;top:478px;font-size:14.50px;color:#4b5565;letter-spacing:0.472px;">14/12/2024</span>
<span class="t" style="left:918.00px;top:478px;font-size:14.50px;color:#4b5565;letter-spacing:0.000px;">USD</span>
<span class="t" style="left:998.38px;top:478px;font-size:14.50px;color:#4b5565;letter-spacing:1.000px;">230</span>
<span class="t" style="left:1128.50px;top:478px;font-size:14.50px;color:#4b5565;letter-spacing:0.938px;">510</span>
<span class="t" style="left:1258.50px;top:478px;font-size:14.50px;color:#4b5565;letter-spacing:1.000px;">0</span>
<div class="r" style="left:1569.20px;top:487.80px;width:4.40px;height:1.30px;background:#5a6474;"></div>
<div class="r" style="left:27.1px;top:521.10px;width:12.7px;height:13px;box-sizing:border-box;border:1.3px solid #7d7d7d;border-radius:3px;background:#fff"></div>
<span class="t" style="left:56.98px;top:518px;font-size:14.50px;color:#4b5565;">8</span>
<span class="t" style="left:96.47px;top:518px;font-size:14.50px;color:#4b5565;letter-spacing:-0.958px;">SITC</span>
<span class="t" style="left:218.07px;top:518px;font-size:14.50px;color:#4b5565;letter-spacing:0.017px;">NANSHA, CHINA</span>
<span class="t" style="left:438.18px;top:518px;font-size:14.50px;color:#4b5565;letter-spacing:-0.108px;">HAIPHONG, VIETNAM</span>
<span class="t" style="left:658.20px;top:518px;font-size:14.50px;color:#4b5565;letter-spacing:0.472px;">05/12/2024</span>
<span class="t" style="left:788.00px;top:518px;font-size:14.50px;color:#4b5565;letter-spacing:0.472px;">14/12/2024</span>
<span class="t" style="left:918.00px;top:518px;font-size:14.50px;color:#4b5565;letter-spacing:0.000px;">USD</span>
<span class="t" style="left:998.50px;top:518px;font-size:14.50px;color:#4b5565;letter-spacing:0.938px;">340</span>
<span class="t" style="left:1128.38px;top:518px;font-size:14.50px;color:#4b5565;letter-spacing:1.000px;">630</span>
<span class="t" style="left:1258.50px;top:518px;font-size:14.50px;color:#4b5565;letter-spacing:1.000px;">0</span>
<div class="r" style="left:1569.20px;top:527.80px;width:4.40px;height:1.30px;background:#5a6474;"></div>
<div class="r" style="left:27.1px;top:561.10px;width:12.7px;height:13px;box-sizing:border-box;border:1.3px solid #7d7d7d;border-radius:3px;background:#fff"></div>
<span class="t" style="left:56.98px;top:558px;font-size:14.50px;color:#4b5565;">9</span>
<span class="t" style="left:96.47px;top:558px;font-size:14.50px;color:#4b5565;letter-spacing:-0.844px;">COSCO</span>
<span class="t" style="left:218.07px;top:558px;font-size:14.50px;color:#4b5565;letter-spacing:0.017px;">NANSHA, CHINA</span>
<span class="t" style="left:438.18px;top:558px;font-size:14.50px;color:#4b5565;letter-spacing:-0.108px;">HAIPHONG, VIETNAM</span>
<span class="t" style="left:658.20px;top:558px;font-size:14.50px;color:#4b5565;letter-spacing:0.472px;">05/12/2024</span>
<span class="t" style="left:788.00px;top:558px;font-size:14.50px;color:#4b5565;letter-spacing:0.472px;">13/12/2024</span>
<span class="t" style="left:918.00px;top:558px;font-size:14.50px;color:#4b5565;letter-spacing:0.000px;">USD</span>
<span class="t" style="left:998.38px;top:558px;font-size:14.50px;color:#4b5565;letter-spacing:1.000px;">250</span>
<span class="t" style="left:1128.50px;top:558px;font-size:14.50px;color:#4b5565;letter-spacing:0.938px;">550</span>
<span class="t" style="left:1258.50px;top:558px;font-size:14.50px;color:#4b5565;letter-spacing:1.000px;">0</span>
<div class="r" style="left:1569.20px;top:567.80px;width:4.40px;height:1.30px;background:#5a6474;"></div>
<div class="r" style="left:27.1px;top:601.10px;width:12.7px;height:13px;box-sizing:border-box;border:1.3px solid #7d7d7d;border-radius:3px;background:#fff"></div>
<span class="t" style="left:56.80px;top:598px;font-size:14.50px;color:#4b5565;letter-spacing:0.875px;">10</span>
<span class="t" style="left:96.47px;top:598px;font-size:14.50px;color:#4b5565;letter-spacing:-0.625px;">SFL/COSCO</span>
<span class="t" style="left:218.07px;top:598px;font-size:14.50px;color:#4b5565;letter-spacing:0.017px;">NANSHA, CHINA</span>
<span class="t" style="left:438.18px;top:598px;font-size:14.50px;color:#4b5565;letter-spacing:-0.108px;">HAIPHONG, VIETNAM</span>
<span class="t" style="left:658.20px;top:598px;font-size:14.50px;color:#4b5565;letter-spacing:0.472px;">05/12/2024</span>
<span class="t" style="left:788.00px;top:598px;font-size:14.50px;color:#4b5565;letter-spacing:0.472px;">13/12/2024</span>
<span class="t" style="left:918.00px;top:598px;font-size:14.50px;color:#4b5565;letter-spacing:0.000px;">USD</span>
<span class="t" style="left:998.38px;top:598px;font-size:14.50px;color:#4b5565;letter-spacing:1.000px;">200</span>
<span class="t" style="left:1128.50px;top:598px;font-size:14.50px;color:#4b5565;letter-spacing:0.938px;">500</span>
<span class="t" style="left:1258.50px;top:598px;font-size:14.50px;color:#4b5565;letter-spacing:1.000px;">0</span>
<div class="r" style="left:1569.20px;top:607.80px;width:4.40px;height:1.30px;background:#5a6474;"></div>
<div class="r" style="left:27.1px;top:641.10px;width:12.7px;height:13px;box-sizing:border-box;border:1.3px solid #7d7d7d;border-radius:3px;background:#fff"></div>
<span class="t" style="left:56.80px;top:638px;font-size:14.50px;color:#4b5565;letter-spacing:1.325px;">11</span>
<span class="t" style="left:96.47px;top:638px;font-size:14.50px;color:#4b5565;letter-spacing:-0.200px;">CZ-ASL</span>
<span class="t" style="left:218.07px;top:638px;font-size:14.50px;color:#4b5565;letter-spacing:0.017px;">NANSHA, CHINA</span>
<span class="t" style="left:438.18px;top:638px;font-size:14.50px;color:#4b5565;letter-spacing:-0.108px;">HAIPHONG, VIETNAM</span>
<span class="t" style="left:658.20px;top:638px;font-size:14.50px;color:#4b5565;letter-spacing:0.472px;">05/12/2024</span>
<span class="t" style="left:788.00px;top:638px;font-size:14.50px;color:#4b5565;letter-spacing:0.472px;">13/12/2024</span>
<span class="t" style="left:918.00px;top:638px;font-size:14.50px;color:#4b5565;letter-spacing:0.000px;">USD</span>
<span class="t" style="left:998.00px;top:638px;font-size:14.50px;color:#4b5565;letter-spacing:1.188px;">190</span>
<span class="t" style="left:1128.50px;top:638px;font-size:14.50px;color:#4b5565;letter-spacing:0.938px;">520</span>
<span class="t" style="left:1258.50px;top:638px;font-size:14.50px;color:#4b5565;letter-spacing:1.000px;">0</span>
<div class="r" style="left:1569.20px;top:647.80px;width:4.40px;height:1.30px;background:#5a6474;"></div>
<div class="r" style="left:27.1px;top:681.10px;width:12.7px;height:13px;box-sizing:border-box;border:1.3px solid #7d7d7d;border-radius:3px;background:#fff"></div>
<span class="t" style="left:56.80px;top:678px;font-size:14.50px;color:#4b5565;letter-spacing:1.000px;">12</span>
<span class="t" style="left:96.47px;top:678px;font-size:14.50px;color:#4b5565;letter-spacing:-0.446px;">SFL/OOCL</span>
<span class="t" style="left:218.07px;top:678px;font-size:14.50px;color:#4b5565;letter-spacing:0.017px;">NANSHA, CHINA</span>
<span class="t" style="left:438.18px;top:678px;font-size:14.50px;color:#4b5565;letter-spacing:-0.108px;">HAIPHONG, VIETNAM</span>
<span class="t" style="left:658.20px;top:678px;font-size:14.50px;color:#4b5565;letter-spacing:0.472px;">05/12/2024</span>
<span class="t" style="left:788.00px;top:678px;font-size:14.50px;color:#4b5565;letter-spacing:0.472px;">12/12/2024</span>
<span class="t" style="left:918.00px;top:678px;font-size:14.50px;color:#4b5565;letter-spacing:0.000px;">USD</span>
<span class="t" style="left:998.00px;top:678px;font-size:14.50px;color:#4b5565;letter-spacing:1.188px;">160</span>
<span class="t" style="left:1128.75px;top:678px;font-size:14.50px;color:#4b5565;letter-spacing:0.812px;">410</span>
<span class="t" style="left:1258.50px;top:678px;font-size:14.50px;color:#4b5565;letter-spacing:1.000px;">0</span>
<div class="r" style="left:1569.20px;top:687.80px;width:4.40px;height:1.30px;background:#5a6474;"></div>
<div class="r" style="left:27.1px;top:721.10px;width:12.7px;height:13px;box-sizing:border-box;border:1.3px solid #7d7d7d;border-radius:3px;background:#fff"></div>
<span class="t" style="left:56.80px;top:718px;font-size:14.50px;color:#4b5565;letter-spacing:0.875px;">13</span>
<span class="t" style="left:97.10px;top:718px;font-size:14.50px;color:#4b5565;letter-spacing:-0.500px;">ASL</span>
<span class="t" style="left:218.07px;top:718px;font-size:14.50px;color:#4b5565;letter-spacing:0.017px;">NANSHA, CHINA</span>
<span class="t" style="left:438.18px;top:718px;font-size:14.50px;color:#4b5565;letter-spacing:-0.108px;">HAIPHONG, VIETNAM</span>
<span class="t" style="left:658.20px;top:718px;font-size:14.50px;color:#4b5565;letter-spacing:0.472px;">05/12/2024</span>
<span class="t" style="left:788.00px;top:718px;font-size:14.50px;color:#4b5565;letter-spacing:0.472px;">12/12/2024</span>
<span class="t" style="left:918.00px;top:718px;font-size:14.50px;color:#4b5565;letter-spacing:0.000px;">USD</span>
<span class="t" style="left:998.38px;top:718px;font-size:14.50px;color:#4b5565;letter-spacing:1.000px;">290</span>
<span class="t" style="left:1128.38px;top:718px;font-size:14.50px;color:#4b5565;letter-spacing:1.000px;">640</span>
<span class="t" style="left:1258.50px;top:718px;font-size:14.50px;color:#4b5565;letter-spacing:1.000px;">0</span>
<div class="r" style="left:1569.20px;top:727.80px;width:4.40px;height:1.30px;background:#5a6474;"></div>
<div class="r" style="left:27.1px;top:761.10px;width:12.7px;height:13px;box-sizing:border-box;border:1.3px solid #7d7d7d;border-radius:3px;background:#fff"></div>
<span class="t" style="left:56.80px;top:758px;font-size:14.50px;color:#4b5565;letter-spacing:0.625px;">14</span>
<span class="t" style="left:96.47px;top:758px;font-size:14.50px;color:#4b5565;letter-spacing:-0.500px;">OOCL</span>
<span class="t" style="left:218.07px;top:758px;font-size:14.50px;color:#4b5565;letter-spacing:0.017px;">NANSHA, CHINA</span>
<span class="t" style="left:438.18px;top:758px;font-size:14.50px;color:#4b5565;letter-spacing:-0.108px;">HAIPHONG, VIETNAM</span>
<span class="t" style="left:658.20px;top:758px;font-size:14.50px;color:#4b5565;letter-spacing:0.472px;">05/12/2024</span>
<span class="t" style="left:788.00px;top:758px;font-size:14.50px;color:#4b5565;letter-spacing:0.472px;">12/12/2024</span>
<span class="t" style="left:918.00px;top:758px;font-size:14.50px;color:#4b5565;letter-spacing:0.000px;">USD</span>
<span class="t" style="left:998.38px;top:758px;font-size:14.50px;color:#4b5565;letter-spacing:1.000px;">210</span>
<span class="t" style="left:1128.75px;top:758px;font-size:14.50px;color:#4b5565;letter-spacing:0.812px;">460</span>
<span class="t" style="left:1258.50px;top:758px;font-size:14.50px;color:#4b5565;letter-spacing:1.000px;">0</span>
<div class="r" style="left:1569.20px;top:767.80px;width:4.40px;height:1.30px;background:#5a6474;"></div>
<div class="r" style="left:27.1px;top:801.10px;width:12.7px;height:13px;box-sizing:border-box;border:1.3px solid #7d7d7d;border-radius:3px;background:#fff"></div>
<span class="t" style="left:56.80px;top:798px;font-size:14.50px;color:#4b5565;letter-spacing:0.875px;">15</span>
<span class="t" style="left:97.10px;top:798px;font-size:14.50px;color:#4b5565;letter-spacing:-0.500px;">ASL</span>
<span class="t" style="left:218.07px;top:798px;font-size:14.50px;color:#4b5565;letter-spacing:0.017px;">NANSHA, CHINA</span>
<span class="t" style="left:438.18px;top:798px;font-size:14.50px;color:#4b5565;letter-spacing:-0.108px;">HAIPHONG, VIETNAM</span>
<span class="t" style="left:658.20px;top:798px;font-size:14.50px;color:#4b5565;letter-spacing:0.472px;">07/12/2024</span>
<span class="t" style="left:788.00px;top:798px;font-size:14.50px;color:#4b5565;letter-spacing:0.472px;">12/12/2024</span>
<span class="t" style="left:918.00px;top:798px;font-size:14.50px;color:#4b5565;letter-spacing:0.000px;">USD</span>
<span class="t" style="left:998.38px;top:798px;font-size:14.50px;color:#4b5565;letter-spacing:1.000px;">250</span>
<span class="t" style="left:1128.50px;top:798px;font-size:14.50px;color:#4b5565;letter-spacing:0.938px;">575</span>
<span class="t" style="left:1258.50px;top:798px;font-size:14.50px;color:#4b5565;letter-spacing:1.000px;">0</span>
<div class="r" style="left:1569.20px;top:807.80px;width:4.40px;height:1.30px;background:#5a6474;"></div>
<div class="r" style="left:27.1px;top:841.10px;width:12.7px;height:13px;box-sizing:border-box;border:1.3px solid #7d7d7d;border-radius:3px;background:#fff"></div>
<span class="t" style="left:56.80px;top:838px;font-size:14.50px;color:#4b5565;letter-spacing:0.875px;">16</span>
<span class="t" style="left:95.97px;top:838px;font-size:14.50px;color:#4b5565;letter-spacing:-0.542px;">HEDE</span>
<span class="t" style="left:218.07px;top:838px;font-size:14.50px;color:#4b5565;letter-spacing:0.017px;">NANSHA, CHINA</span>
<span class="t" style="left:438.07px;top:838px;font-size:14.50px;color:#4b5565;letter-spacing:-0.174px;">HO CHI MINH CITY, VIETNAM</span>
<span class="t" style="left:658.20px;top:838px;font-size:14.50px;color:#4b5565;letter-spacing:0.472px;">07/12/2024</span>
<span class="t" style="left:788.00px;top:838px;font-size:14.50px;color:#4b5565;letter-spacing:0.472px;">18/12/2024</span>
<span class="t" style="left:918.00px;top:838px;font-size:14.50px;color:#4b5565;letter-spacing:0.000px;">USD</span>
<span class="t" style="left:998.50px;top:838px;font-size:14.50px;color:#4b5565;letter-spacing:0.938px;">325</span>
<span class="t" style="left:1128.38px;top:838px;font-size:14.50px;color:#4b5565;letter-spacing:1.000px;">625</span>
<span class="t" style="left:1258.50px;top:838px;font-size:14.50px;color:#4b5565;letter-spacing:1.000px;">0</span>
<div class="r" style="left:1569.20px;top:847.80px;width:4.40px;height:1.30px;background:#5a6474;"></div>
<div class="r" style="left:27.1px;top:881.10px;width:12.7px;height:13px;box-sizing:border-box;border:1.3px solid #7d7d7d;border-radius:3px;background:#fff"></div>
<span class="t" style="left:56.80px;top:878px;font-size:14.50px;color:#4b5565;letter-spacing:1.000px;">17</span>
<span class="t" style="left:97.10px;top:878px;font-size:14.50px;color:#4b5565;letter-spacing:-0.304px;">AOL-HEDE</span>
<span class="t" style="left:218.07px;top:878px;font-size:14.50px;color:#4b5565;letter-spacing:0.017px;">NANSHA, CHINA</span>
<span class="t" style="left:438.07px;top:878px;font-size:14.50px;color:#4b5565;letter-spacing:-0.174px;">HO CHI MINH CITY, VIETNAM</span>
<span class="t" style="left:658.20px;top:878px;font-size:14.50px;color:#4b5565;letter-spacing:0.472px;">07/12/2024</span>
<span class="t" style="left:788.00px;top:878px;font-size:14.50px;color:#4b5565;letter-spacing:0.472px;">18/12/2024</span>
<span class="t" style="left:918.00px;top:878px;font-size:14.50px;color:#4b5565;letter-spacing:0.000px;">USD</span>
<span class="t" style="left:998.38px;top:878px;font-size:14.50px;color:#4b5565;letter-spacing:1.000px;">250</span>
<span class="t" style="left:1128.50px;top:878px;font-size:14.50px;color:#4b5565;letter-spacing:0.938px;">550</span>
<span class="t" style="left:1258.50px;top:878px;font-size:14.50px;color:#4b5565;letter-spacing:1.000px;">0</span>
<div class="r" style="left:1569.20px;top:887.80px;width:4.40px;height:1.30px;background:#5a6474;"></div>
<div class="r" style="left:27.1px;top:921.10px;width:12.7px;height:13px;box-sizing:border-box;border:1.3px solid #7d7d7d;border-radius:3px;background:#fff"></div>
<span class="t" style="left:56.80px;top:918px;font-size:14.50px;color:#4b5565;letter-spacing:0.875px;">18</span>
<span class="t" style="left:96.47px;top:918px;font-size:14.50px;color:#4b5565;letter-spacing:-0.688px;">SFL COSCO</span>
<span class="t" style="left:218.07px;top:918px;font-size:14.50px;color:#4b5565;letter-spacing:0.017px;">NANSHA, CHINA</span>
<span class="t" style="left:438.07px;top:918px;font-size:14.50px;color:#4b5565;letter-spacing:-0.174px;">HO CHI MINH CITY, VIETNAM</span>
<span class="t" style="left:658.20px;top:918px;font-size:14.50px;color:#4b5565;letter-spacing:0.472px;">05/12/2024</span>
<span class="t" style="left:788.00px;top:918px;font-size:14.50px;color:#4b5565;letter-spacing:0.472px;">15/12/2024</span>
<span class="t" style="left:918.00px;top:918px;font-size:14.50px;color:#4b5565;letter-spacing:0.000px;">USD</span>
<span class="t" style="left:998.50px;top:918px;font-size:14.50px;color:#4b5565;letter-spacing:0.938px;">375</span>
<span class="t" style="left:1128.38px;top:918px;font-size:14.50px;color:#4b5565;letter-spacing:1.000px;">750</span>
<span class="t" style="left:1258.50px;top:918px;font-size:14.50px;color:#4b5565;letter-spacing:1.000px;">0</span>
<div class="r" style="left:1569.20px;top:927.80px;width:4.40px;height:1.30px;background:#5a6474;"></div>
<svg style="left:1635.10px;top:816.00px" width="32.00" height="32.00" viewBox="0 0 24 24" fill="none" stroke="#0d6b10" stroke-width="2.10" stroke-linecap="round" stroke-linejoin="round"><path d="M21 15a2 2 0 0 1-2 2H7l-4 4V5a2 2 0 0 1 2-2h14a2 2 0 0 1 2 2z"/></svg>
<div class="r" style="left:215.3px;top:4px;width:151.8px;height:35.7px;box-sizing:border-box;border:3px solid #ff2200"></div>
<div class="r" style="left:1217px;top:161px;width:152px;height:35.7px;box-sizing:border-box;border:3px solid #ff2200"></div>
<svg style="left:0;top:0" width="1681" height="967" viewBox="0 0 1681 967"><polyline points="346.63,54.40 596.50,424.60 1198.76,203.32" stroke="#ff2200" stroke-width="3.0" fill="none" stroke-linejoin="miter" stroke-linecap="butt"/><polygon points="338.80,42.80 353.41,51.04 340.98,59.43" fill="#ff2200"/><polygon points="1211.90,198.50 1200.41,210.71 1195.23,196.63" fill="#ff2200"/></svg>
<div class="r" style="left:1679.60px;top:0.00px;width:1.40px;height:967.00px;background:linear-gradient(#523b7e,#48347a 40%,#2c2a6c 80%,#1c2050);"></div>
<svg style="left:0;top:957px" width="10" height="10" viewBox="0 0 10 10"><path d="M0 0 A10 10 0 0 0 10 10 L0 10 Z" fill="#0c0c14"/></svg>
<svg style="left:1672.2px;top:958.2px" width="9" height="9" viewBox="0 0 9 9"><path d="M9 0 L7.4 0 A7.4 7.4 0 0 1 0 7.4 L0 9 L9 9 Z" fill="#141a3c"/></svg>
</div></body></html>
